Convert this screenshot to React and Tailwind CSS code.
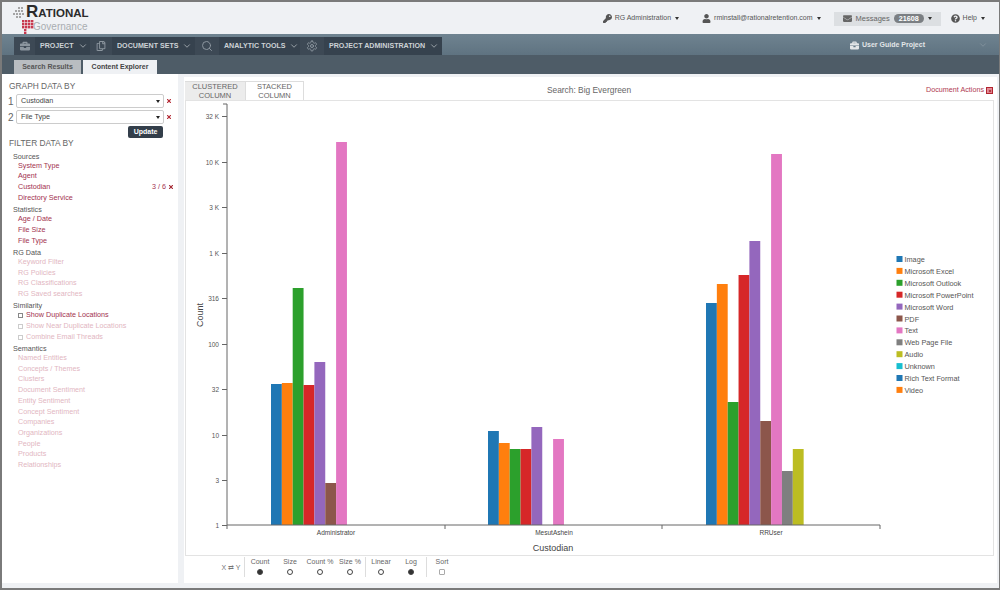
import React from "react";
import { FaKey, FaUser, FaEnvelope, FaQuestionCircle, FaBriefcase, FaRegCopy, FaTimes } from "react-icons/fa";
import { LuChevronDown, LuSearch, LuSettings } from "react-icons/lu";

const series = {
  blue: "#1f77b4",
  orange: "#ff7f0e",
  green: "#2ca02c",
  red: "#d62728",
  purple: "#9467bd",
  brown: "#8c564b",
  pink: "#e377c2",
  grey: "#7f7f7f",
  olive: "#bcbd22",
  cyan: "#17becf",
};

const groups = [
  {
    label: "Administrator",
    x: 271,
    cx: 336,
    bars: [
      ["blue", 384],
      ["orange", 383],
      ["green", 288],
      ["red", 385],
      ["purple", 362],
      ["brown", 483],
      ["pink", 142],
    ],
  },
  {
    label: "MesutAshein",
    x: 488,
    cx: 554,
    bars: [
      ["blue", 431],
      ["orange", 443],
      ["green", 449],
      ["red", 449],
      ["purple", 427],
      [null, 0],
      ["pink", 439],
    ],
  },
  {
    label: "RRUser",
    x: 706,
    cx: 771,
    bars: [
      ["blue", 303],
      ["orange", 284],
      ["green", 402],
      ["red", 275],
      ["purple", 241],
      ["brown", 421],
      ["pink", 154],
      ["grey", 471],
      ["olive", 449],
    ],
  },
];

const ticks = [
  ["32 K", 116],
  ["10 K", 162],
  ["3 K", 207],
  ["1 K", 253],
  ["316", 298],
  ["100", 344],
  ["32", 389],
  ["10", 435],
  ["3", 480],
  ["1", 525],
];

const legend = [
  ["Image", "blue"],
  ["Microsoft Excel", "orange"],
  ["Microsoft Outlook", "green"],
  ["Microsoft PowerPoint", "red"],
  ["Microsoft Word", "purple"],
  ["PDF", "brown"],
  ["Text", "pink"],
  ["Web Page File", "grey"],
  ["Audio", "olive"],
  ["Unknown", "cyan"],
  ["Rich Text Format", "blue"],
  ["Video", "orange"],
];

const Chart = () => (
  <svg viewBox="186 101 807 454" className="block w-full h-full" fontFamily="'Liberation Sans', Arial, sans-serif">
    {groups.map((g) =>
      g.bars.map(([c, top], i) =>
        c ? <rect key={g.label + i} x={g.x + i * 10.85} y={top} width={10.85} height={525 - top} fill={series[c]} /> : null
      )
    )}
    <path d="M227 104V525H880" fill="none" stroke="#666" strokeWidth="1" />
    <path d="M223 104H227M227 525V529M445 525V529M662 525V529M880 525V529" fill="none" stroke="#666" strokeWidth="1" />
    {ticks.map(([t, y]) => (
      <g key={t}>
        <path d={`M222 ${y + 0.5}H227`} stroke="#666" />
        <text x="219" y={y + 2.5} textAnchor="end" fontSize="6.5" fill="#555">
          {t}
        </text>
      </g>
    ))}
    {groups.map((g) => (
      <text key={g.label} x={g.cx} y="535" textAnchor="middle" fontSize="6.5" fill="#444">
        {g.label}
      </text>
    ))}
    <text x="553" y="551" textAnchor="middle" fontSize="9" fill="#444">
      Custodian
    </text>
    <text transform="translate(203 315) rotate(-90)" textAnchor="middle" fontSize="9" fill="#444">
      Count
    </text>
    {legend.map(([t, c], i) => (
      <g key={t}>
        <rect x="896.5" y={256 + i * 11.9} width="6" height="6" fill={series[c]} />
        <text x="904.5" y={262 + i * 11.9} fontSize="7.3" fill="#555">
          {t}
        </text>
      </g>
    ))}
  </svg>
);

const greyDots = [[5, 1], [8, 1], [2, 4], [5, 4], [8, 4], [0, 7], [3, 7], [6, 7], [9, 7], [3, 10], [6, 10]];
const redDots = [[9, 14], [12, 14], [15, 14], [18, 14], [9, 17], [12, 17], [15, 17], [18, 17], [9, 20], [12, 20], [15, 20], [18, 20], [11, 23], [11, 26]];

const Logo = () => (
  <div className="flex items-start ml-[11px] w-[80px] mt-[3px]">
    <svg width="21" height="29" viewBox="0 0 21 29" className="shrink-0 mt-[1px]">
      {greyDots.map(([x, y]) => (
        <rect key={`${x}-${y}`} x={x} y={y} width="2" height="2" fill="#a5a5a5" />
      ))}
      {redDots.map(([x, y]) => (
        <rect key={`${x}-${y}`} x={x} y={y} width="2.4" height="2.4" fill="#c8384f" />
      ))}
    </svg>
    <div className="-ml-[8px]">
      <div className="text-[17px] leading-[14px] font-bold text-[#2b2b2b] whitespace-nowrap">
        R<span className="text-[11.5px]">ATIONAL</span>
      </div>
      <div className="text-[10px] leading-[12px] mt-[1px] text-[#a9adb1] ml-[7px]">Governance</div>
    </div>
  </div>
);

const TopItem = ({ icon, children, className = "" }) => (
  <div className={`flex items-center gap-[3px] text-[7px] text-[#555] whitespace-nowrap ${className}`}>
    {icon}
    <span>{children}</span>
    <span className="ml-[1px] border-x-[2.5px] border-t-[3px] border-x-transparent border-t-[#333]" />
  </div>
);

const NavItem = ({ icon, label, labelWidth, iconWidth }) => (
  <>
    <div className={`h-full flex items-center justify-center bg-[#3d4955] text-[#8c969f] ${iconWidth}`}>{icon}</div>
    <div className={`h-full flex items-center pl-[5px] gap-[4px] text-[7.1px] font-bold text-[#cdd2d6] whitespace-nowrap ${labelWidth}`}>
      {label}
      <LuChevronDown size={10} color="#aab1b7" />
    </div>
  </>
);

const SubHead = ({ children }) => <div className="mt-[0.7px] h-[10px] leading-[12px] pl-[11px] text-[7.2px] text-[#555]">{children}</div>;

const Row = ({ children, tone }) => <div className={`h-[10.7px] leading-[10.7px] pl-[16px] text-[7.2px] ${tone}`}>{children}</div>;

const active = "text-[#a3324f]";
const faded = "text-[#e2b6c1]";

const CheckRow = ({ children, tone, box }) => (
  <div className={`h-[10.7px] flex items-center pl-[16px] gap-[3px] text-[7.2px] ${tone}`}>
    <span className={`w-[5px] h-[5px] border bg-white ${box}`} />
    {children}
  </div>
);

const Select = ({ n, value }) => (
  <div className="flex items-center h-[14px] mb-[2px]">
    <span className="w-[8px] text-[10px] text-[#666] ml-[6px]">{n}</span>
    <div className="w-[148px] h-[14px] border border-[#ccc] rounded-[2px] bg-white flex items-center justify-between pl-[4px] pr-[3px] text-[7.2px] text-[#444]">
      {value}
      <span className="border-x-[2px] border-t-[3px] border-x-transparent border-t-[#222]" />
    </div>
    <FaTimes size={6} color="#b2242f" className="ml-[2px]" />
  </div>
);

const Radio = ({ label, on }) => (
  <div className="flex flex-col items-center gap-[2px] w-[30px]">
    <span className="text-[7px] leading-[10px] text-[#666] whitespace-nowrap">{label}</span>
    <span className={`w-[6px] h-[6px] rounded-full border border-[#444] ${on ? "bg-[#333]" : "bg-white"}`} />
  </div>
);

const Sep = () => <div className="w-px h-[20px] bg-[#ddd]" />;

export default function App() {
  return (
    <div className="w-[1000px] h-[590px] overflow-hidden bg-[#eff1f4] border-t-2 border-l-2 border-r border-[#7a7a7a] font-['Liberation_Sans',sans-serif] flex flex-col">
      <header className="h-[32px] shrink-0 flex items-center">
        <Logo />
        <div className="ml-auto flex items-center h-[14px] mt-[1px]">
          <TopItem icon={<FaKey size={9} color="#555" />}>RG Administration</TopItem>
          <TopItem className="ml-[23px]" icon={<FaUser size={9} color="#555" />}>
            rminstall@rationalretention.com
          </TopItem>
          <div className="ml-[13px] w-[107px] h-[14px] bg-[#dcdfe2] flex items-center pl-[9px] gap-[4px] text-[7.5px] text-[#666]">
            <FaEnvelope size={9} color="#666" />
            Messages
            <span className="h-[9px] leading-[9px] px-[5px] rounded-full bg-[#7b7f83] text-white font-bold text-[7.2px]">21608</span>
            <span className="border-x-[2.5px] border-t-[3px] border-x-transparent border-t-[#333]" />
          </div>
          <TopItem className="ml-[10px] mr-[14px]" icon={<FaQuestionCircle size={9} color="#555" />}>
            Help
          </TopItem>
        </div>
      </header>

      <nav className="h-[21px] shrink-0 bg-gradient-to-b from-[#6f8390] to-[#5f7381] flex items-start pl-[12px] pr-[11px]">
        <div className="mt-[3px] h-[18px] flex items-center bg-[#36424e]">
          <NavItem icon={<FaBriefcase size={10} />} label="PROJECT" iconWidth="w-[21px]" labelWidth="w-[55px]" />
          <NavItem icon={<FaRegCopy size={10} />} label="DOCUMENT SETS" iconWidth="w-[22px]" labelWidth="w-[83px]" />
          <NavItem icon={<LuSearch size={12} />} label="ANALYTIC TOOLS" iconWidth="w-[24px]" labelWidth="w-[81px]" />
          <NavItem icon={<LuSettings size={12} />} label="PROJECT ADMINISTRATION" iconWidth="w-[24px]" labelWidth="w-[118px]" />
        </div>
        <div className="ml-auto mt-[6px] flex items-center text-[7px] font-bold text-[#e3e6e8] gap-[3px] whitespace-nowrap">
          <FaBriefcase size={9} color="#e3e6e8" />
          User Guide Project
          <LuChevronDown size={10} color="#84949f" className="ml-[50px]" />
        </div>
      </nav>

      <div className="h-[19px] shrink-0 bg-[#4e5c67] flex items-end pl-[12px] gap-[2px]">
        <div className="w-[67px] h-[14px] bg-[#b9bdc1] text-[#555] font-bold text-[7px] leading-[14px] text-center">Search Results</div>
        <div className="w-[74px] h-[14px] bg-[#eff1f4] text-[#444] font-bold text-[7px] leading-[14px] text-center">Content Explorer</div>
      </div>

      <div className="flex-1 flex min-h-0">
        <aside className="w-[176px] shrink-0 bg-white pt-[7px] mb-[5px]">
          <div className="pl-[7px] h-[13px] leading-[11px] text-[8.4px] text-[#666]">GRAPH DATA BY</div>
          <Select n="1" value="Custodian" />
          <Select n="2" value="File Type" />
          <div className="ml-[126px] mt-[2px] w-[35px] h-[12px] rounded-[2px] bg-[#333e4a] text-white font-bold text-[7px] leading-[12px] text-center">Update</div>
          <div className="pl-[7px] h-[12px] leading-[10px] text-[8.4px] text-[#666]">FILTER DATA BY</div>
          <SubHead>Sources</SubHead>
          <Row tone={active}>System Type</Row>
          <Row tone={active}>Agent</Row>
          <div className={`h-[10.7px] leading-[10.7px] pl-[16px] text-[7.2px] flex items-center justify-between pr-[4px] ${active}`}>
            <span>Custodian</span>
            <span className="flex items-center gap-[2px]">
              3 / 6 <FaTimes size={6} color="#a3242f" />
            </span>
          </div>
          <Row tone={active}>Directory Service</Row>
          <SubHead>Statistics</SubHead>
          <Row tone={active}>Age / Date</Row>
          <Row tone={active}>File Size</Row>
          <Row tone={active}>File Type</Row>
          <SubHead>RG Data</SubHead>
          <Row tone={faded}>Keyword Filter</Row>
          <Row tone={faded}>RG Policies</Row>
          <Row tone={faded}>RG Classifications</Row>
          <Row tone={faded}>RG Saved searches</Row>
          <SubHead>Similarity</SubHead>
          <CheckRow tone={active} box="border-[#888]">Show Duplicate Locations</CheckRow>
          <CheckRow tone={faded} box="border-[#ccc]">Show Near Duplicate Locations</CheckRow>
          <CheckRow tone={faded} box="border-[#ccc]">Combine Email Threads</CheckRow>
          <SubHead>Semantics</SubHead>
          {["Named Entities", "Concepts / Themes", "Clusters", "Document Sentiment", "Entity Sentiment", "Concept Sentiment", "Companies", "Organizations", "People", "Products", "Relationships"].map((t) => (
            <Row key={t} tone={faded}>
              {t}
            </Row>
          ))}
        </aside>

        <main className="flex-1 ml-[6px] mr-[2px] mt-[3px] mb-[5px] bg-white flex flex-col min-w-0">
          <div className="h-[23px] shrink-0 pt-[4px] flex items-stretch">
            <div className="ml-[1px] w-[60px] bg-[#ececec] border-t border-[#ddd] text-[7.5px] leading-[8.5px] text-[#666] text-center pt-[1px]">
              CLUSTERED
              <br />
              COLUMN
            </div>
            <div className="w-[59px] bg-white border border-b-0 border-[#ddd] text-[7.5px] leading-[8.5px] text-[#666] text-center pt-[1px]">
              STACKED
              <br />
              COLUMN
            </div>
            <div className="flex-1 text-center text-[8.4px] leading-[19px] text-[#666] pr-[112px] pl-[60px]">Search: Big Evergreen</div>
            <div className="flex items-center gap-[2px] mr-[4px] h-[19px] text-[7.2px] text-[#b03a52]">
              Document Actions
              <span className="w-[7px] h-[7px] bg-[#e58f99] border border-[#b2242f] flex items-center justify-center">
                <FaTimes size={4} color="#a3242f" />
              </span>
            </div>
          </div>
          <div className="ml-[1px] w-[809px] h-[456px] shrink-0 border border-[#e3e3e3]">
            <Chart />
          </div>
          <div className="flex-1 flex items-start pt-[1px] pl-[34px]">
            <span className="text-[7px] text-[#777] w-[26px] text-center mt-[6px]">X ⇄ Y</span>
            <Sep />
            <Radio label="Count" on />
            <Radio label="Size" />
            <Radio label="Count %" />
            <Radio label="Size %" />
            <Sep />
            <Radio label="Linear" />
            <Radio label="Log" on />
            <Sep />
            <div className="flex flex-col items-center gap-[2px] w-[30px]">
              <span className="text-[7px] leading-[10px] text-[#666]">Sort</span>
              <span className="w-[6px] h-[6px] border border-[#aaa] rounded-[1px] bg-white" />
            </div>
          </div>
        </main>
      </div>
      <div className="h-[2px] shrink-0 bg-[#7a7a7a]" />
    </div>
  );
}
